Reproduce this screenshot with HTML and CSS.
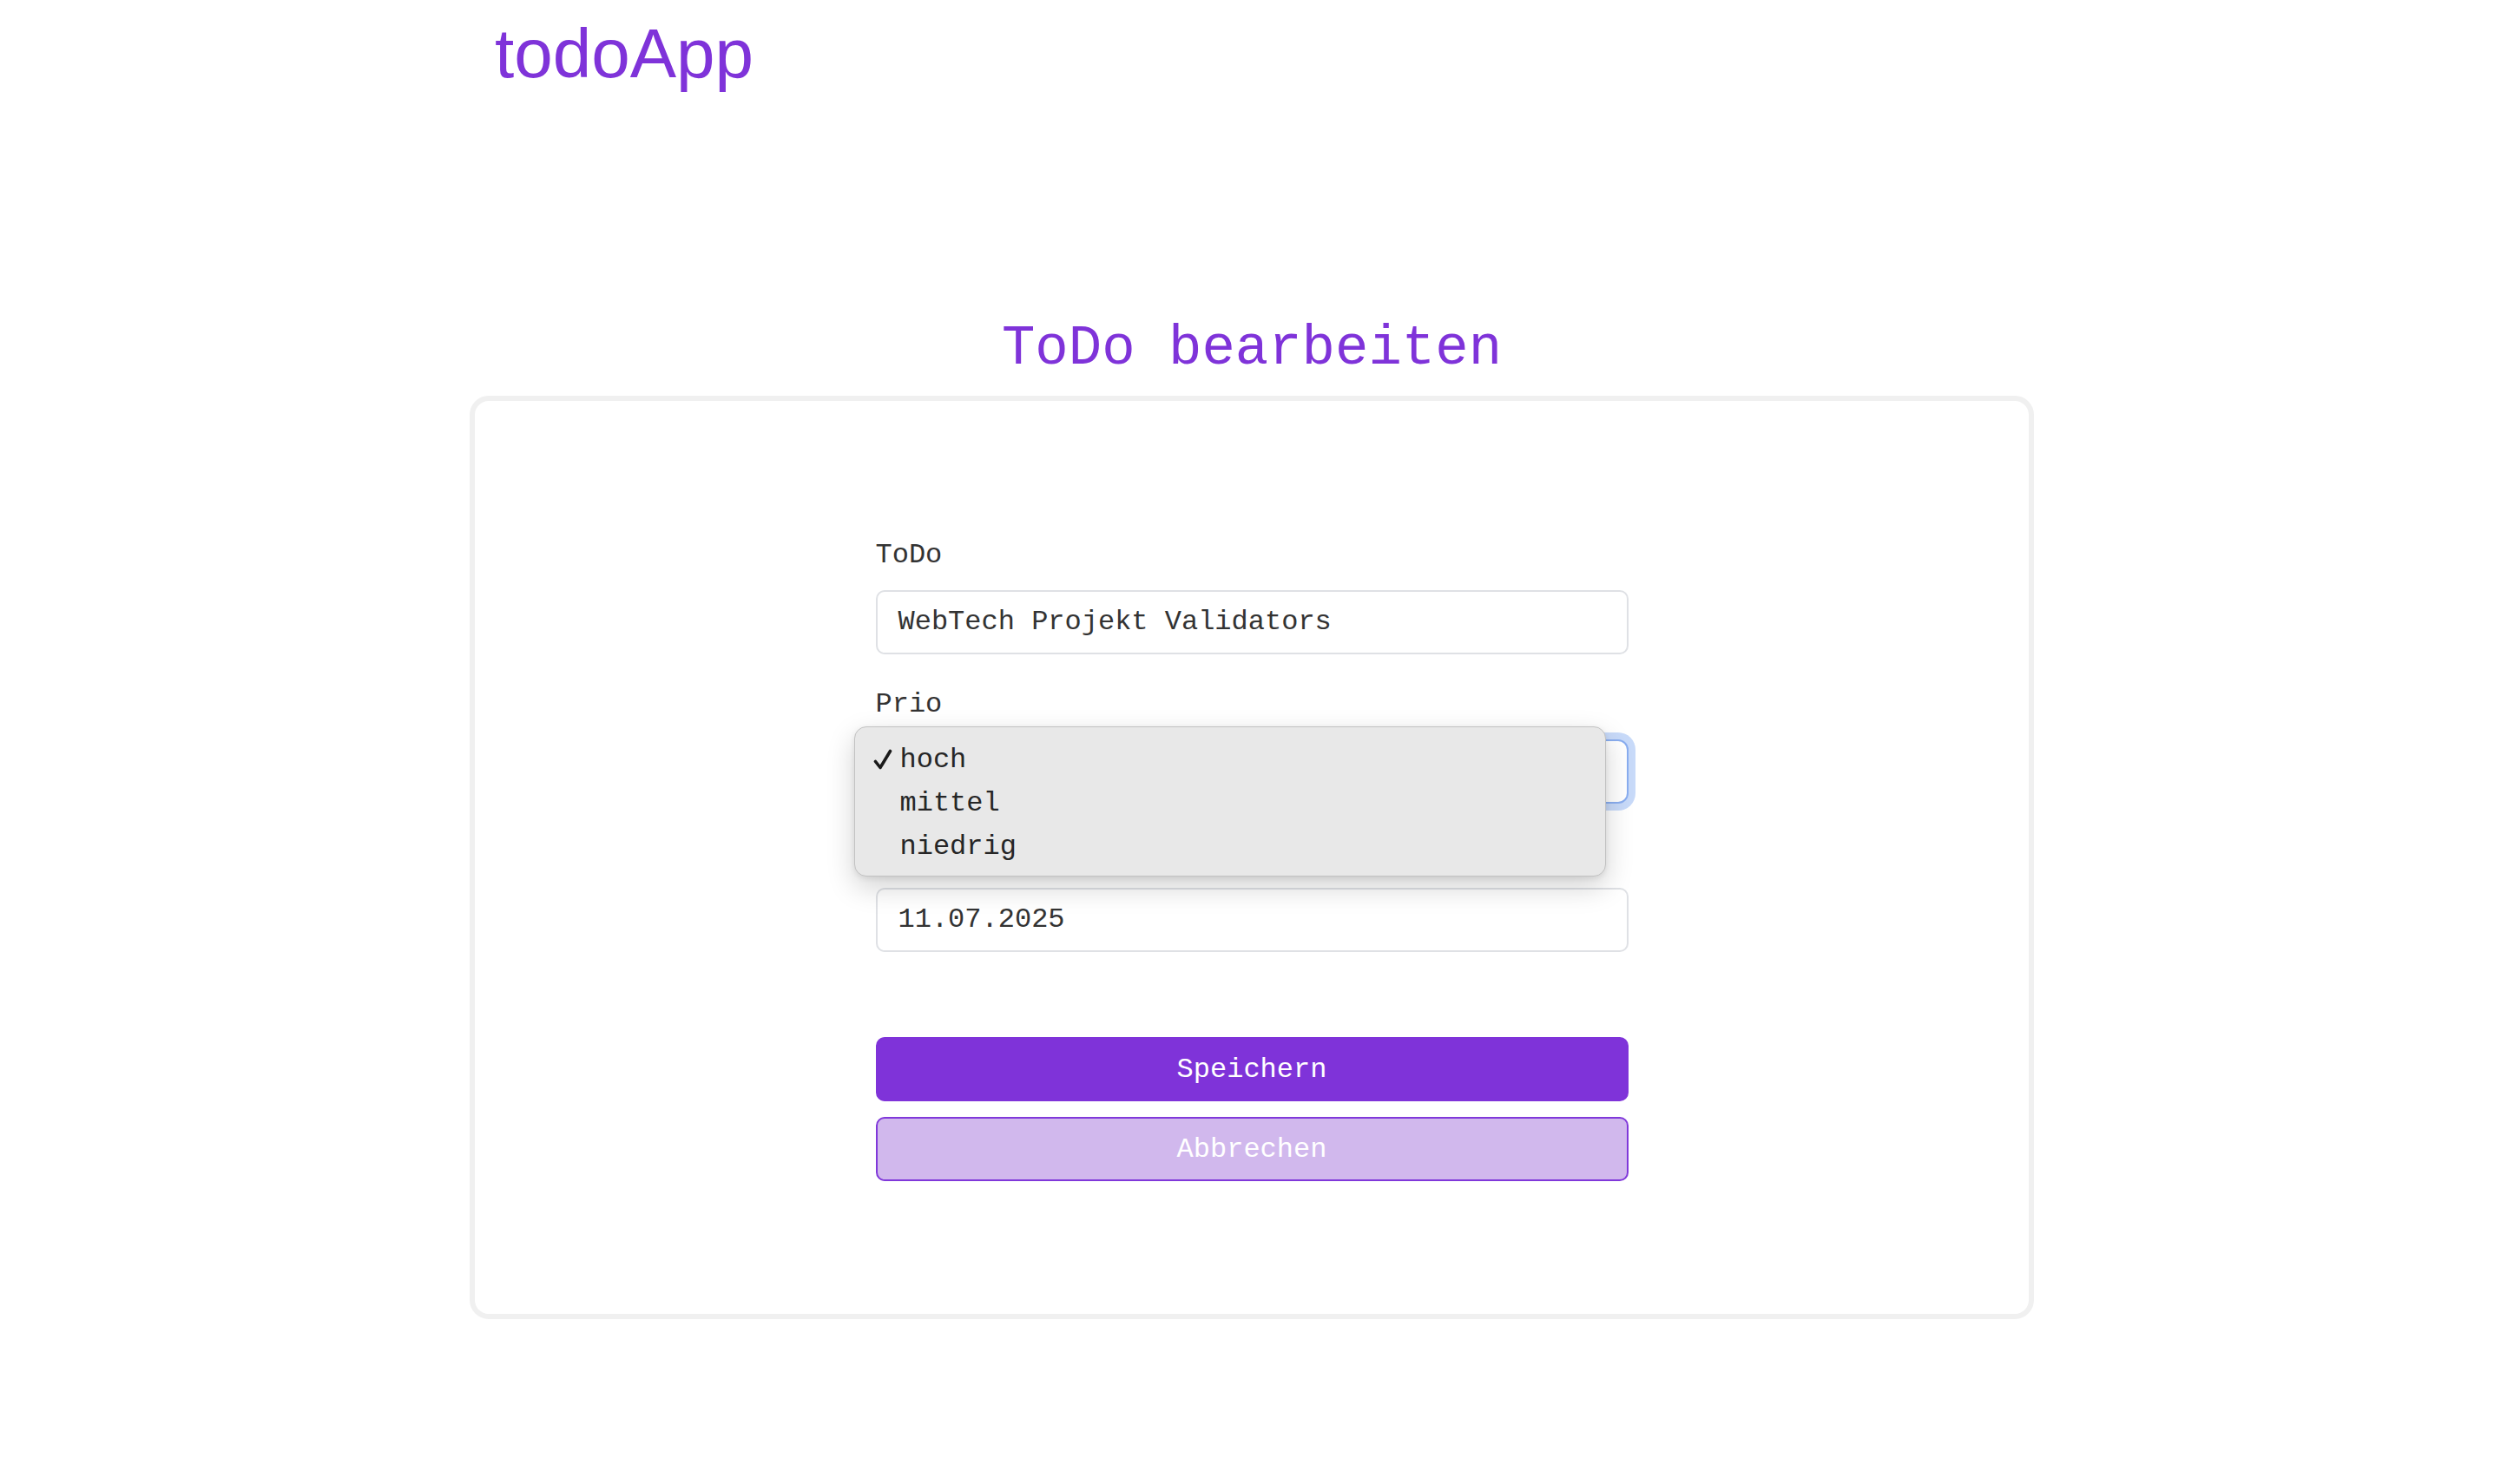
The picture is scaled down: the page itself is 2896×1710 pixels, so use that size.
FILE: index.html
```html
<!DOCTYPE html>
<html lang="de">
<head>
<meta charset="utf-8">
<title>todoApp</title>
<link rel="stylesheet" href="styles.css">
</head>
<body>
<header class="header">
  <div class="logo">todoApp</div>
</header>
<main class="main">
  <h1 class="title">ToDo bearbeiten</h1>
  <section class="card">
    <form class="form">
      <div class="group">
        <label class="label">ToDo</label>
        <div class="field">WebTech Projekt Validators</div>
      </div>
      <div class="group">
        <label class="label">Prio</label>
        <div class="select-wrap">
          <div class="field select" aria-label="hoch"></div>
          <div class="popup">
            <div class="option selected">
              <svg class="check" width="22" height="24" viewBox="0 0 22 24"><path d="M2.5 14.5 L8 21.5 L19.5 2.5" fill="none" stroke="#1a1a1a" stroke-width="3.6" stroke-linecap="round" stroke-linejoin="round"/></svg>
              <span>hoch</span>
            </div>
            <div class="option"><span>mittel</span></div>
            <div class="option"><span>niedrig</span></div>
          </div>
        </div>
      </div>
      <div class="group">
        <label class="label label-covered" aria-label="Deadline"></label>
        <div class="field">11.07.2025</div>
      </div>
      <div class="buttons">
        <button type="button" class="btn btn-primary">Speichern</button>
        <button type="button" class="btn btn-secondary">Abbrechen</button>
      </div>
    </form>
  </section>
</main>
</body>
</html>
```

FILE: styles.css
```css
html, body {
  margin: 0;
  padding: 0;
  background: #ffffff;
}

body {
  padding-right: 12px;
  font-family: "Courier New", "Nimbus Mono PS", "Liberation Mono", monospace;
  color: #333333;
}

.header {
  width: 1802px;
  margin: 0 auto;
  box-sizing: border-box;
  padding: 16px 29px 0;
}

.logo {
  font-family: "Liberation Sans", Arial, sans-serif;
  font-size: 80px;
  line-height: 92px;
  color: #7f33d9;
}

.main {
  width: 1802px;
  margin: 0 auto;
}

.title {
  margin: 258px 0 18px;
  font-family: "Courier New", "Nimbus Mono PS", "Liberation Mono", monospace;
  font-weight: normal;
  font-size: 64px;
  line-height: 72px;
  color: #7f33d9;
  text-align: center;
}

.card {
  box-sizing: border-box;
  width: 1802px;
  border: 6px solid #f0f0f0;
  border-radius: 22px;
  padding: 157px 0 153px;
  background: #ffffff;
}

.form {
  width: 867px;
  margin: 0 auto;
  display: flex;
  flex-direction: column;
}

.group {
  display: flex;
  flex-direction: column;
  margin-bottom: 37px;
}

.group:nth-child(3) {
  margin-bottom: 0;
}

.label {
  font-size: 32px;
  line-height: 36px;
  height: 36px;
  color: #333333;
  padding-top: 3px;
  margin-bottom: 22px;
}

.group:nth-child(3) .label {
  margin-bottom: 21px;
}

.field {
  box-sizing: border-box;
  height: 74px;
  border: 2px solid #dfe1e5;
  border-radius: 10px;
  padding: 0 24px;
  font-size: 32px;
  line-height: 70px;
  color: #333333;
  background: #ffffff;
}

.select-wrap {
  position: relative;
}

.select {
  border-color: #8aaef0;
  border-radius: 12px;
  box-shadow: 0 0 0 8px #c8daf9;
}

.popup {
  position: absolute;
  left: -25px;
  top: -15px;
  width: 866px;
  box-sizing: border-box;
  padding: 13px 0 8px;
  background: #e8e8e8;
  border: 1px solid #c2c2c2;
  border-radius: 14px;
  box-shadow: 0 12px 32px rgba(0, 0, 0, 0.18), 0 2px 6px rgba(0, 0, 0, 0.08);
  z-index: 2;
}

.option {
  position: relative;
  height: 50px;
  line-height: 50px;
  padding-left: 52px;
  font-size: 32px;
  color: #262626;
}

.check {
  position: absolute;
  left: 21px;
  top: 12px;
}

.buttons {
  margin-top: 98px;
  display: flex;
  flex-direction: column;
  gap: 18px;
}

.btn {
  box-sizing: border-box;
  height: 74px;
  border-radius: 10px;
  font-family: "Courier New", "Nimbus Mono PS", "Liberation Mono", monospace;
  font-size: 32px;
  color: #ffffff;
  cursor: pointer;
  padding: 0;
}

.btn-primary {
  background: #7f33d9;
  border: 2px solid #7f33d9;
}

.btn-secondary {
  background: #d1b8ed;
  border: 2px solid #8038da;
}
```
